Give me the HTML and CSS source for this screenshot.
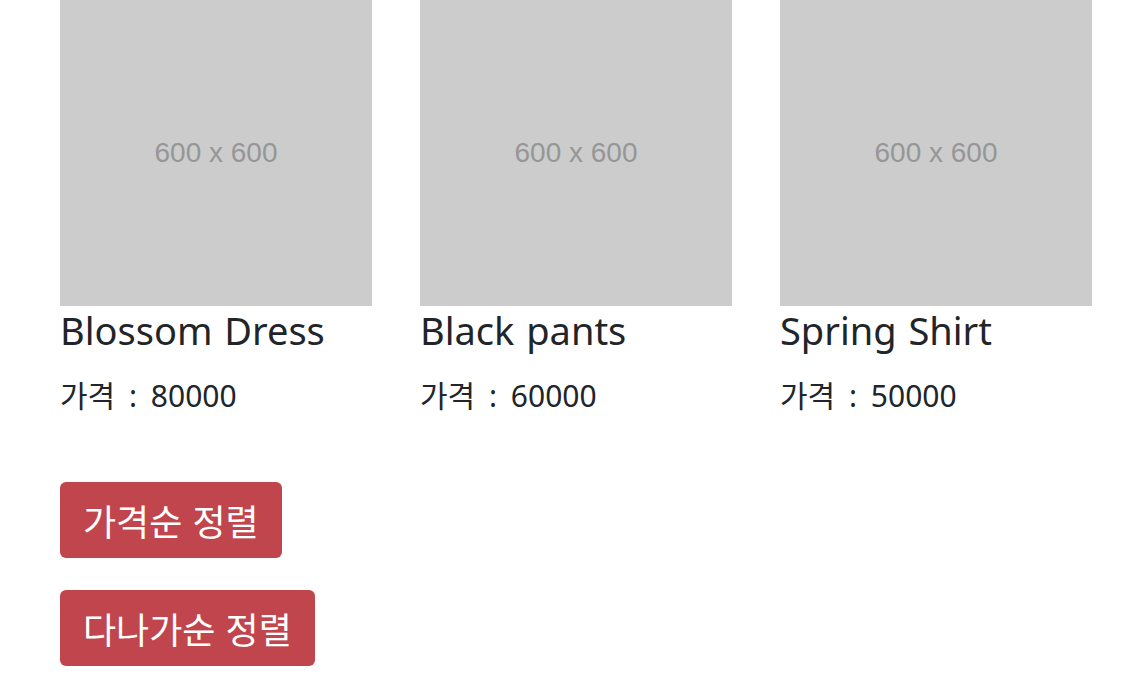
FILE: index.html
```html
<!DOCTYPE html>
<html lang="ko">
<head>
<meta charset="utf-8">
<title>Shop</title>
<link rel="stylesheet" href="styles.css">
</head>
<body>
<div class="container">
  <div class="products">
    <div class="product">
      <div class="thumb">600 x 600</div>
      <h4 class="name">Blossom Dress</h4>
      <p class="price">가격 : 80000</p>
    </div>
    <div class="product">
      <div class="thumb">600 x 600</div>
      <h4 class="name">Black pants</h4>
      <p class="price">가격 : 60000</p>
    </div>
    <div class="product">
      <div class="thumb">600 x 600</div>
      <h4 class="name">Spring Shirt</h4>
      <p class="price">가격 : 50000</p>
    </div>
  </div>
  <div class="actions">
    <button class="btn">가격순 정렬</button>
    <button class="btn">다나가순 정렬</button>
  </div>
</div>
</body>
</html>
```
FILE: styles.css
```css
html, body {
  margin: 0;
  padding: 0;
  background: #ffffff;
}
body {
  font-family: "Noto Sans", "Noto Sans CJK KR", sans-serif;
  color: #212529;
}
.container {
  padding: 0 44px 0 60px;
}
.products {
  display: grid;
  grid-template-columns: repeat(3, 312px);
  column-gap: 48px;
}
.thumb {
  height: 306px;
  background: #cccccc;
  color: #969696;
  font-family: "Liberation Sans", Arial, sans-serif;
  font-size: 28px;
  display: flex;
  align-items: center;
  justify-content: center;
}
.name {
  margin: 0 0 18px;
  font-size: 38px;
  font-weight: 400;
  line-height: 49px;
  word-spacing: 2px;
  white-space: nowrap;
}
.price {
  margin: 0;
  font-size: 30px;
  line-height: 45px;
  word-spacing: 6px;
}
.actions {
  margin-top: 64px;
  display: flex;
  flex-direction: column;
  align-items: flex-start;
  gap: 32px;
}
.btn {
  font-family: "Noto Sans CJK KR", sans-serif;
  font-size: 36px;
  line-height: 48px;
  color: #ffffff;
  background: #c1454c;
  border: 0;
  border-radius: 6px;
  padding: 14px 23px;
  height: 76px;
}
```
